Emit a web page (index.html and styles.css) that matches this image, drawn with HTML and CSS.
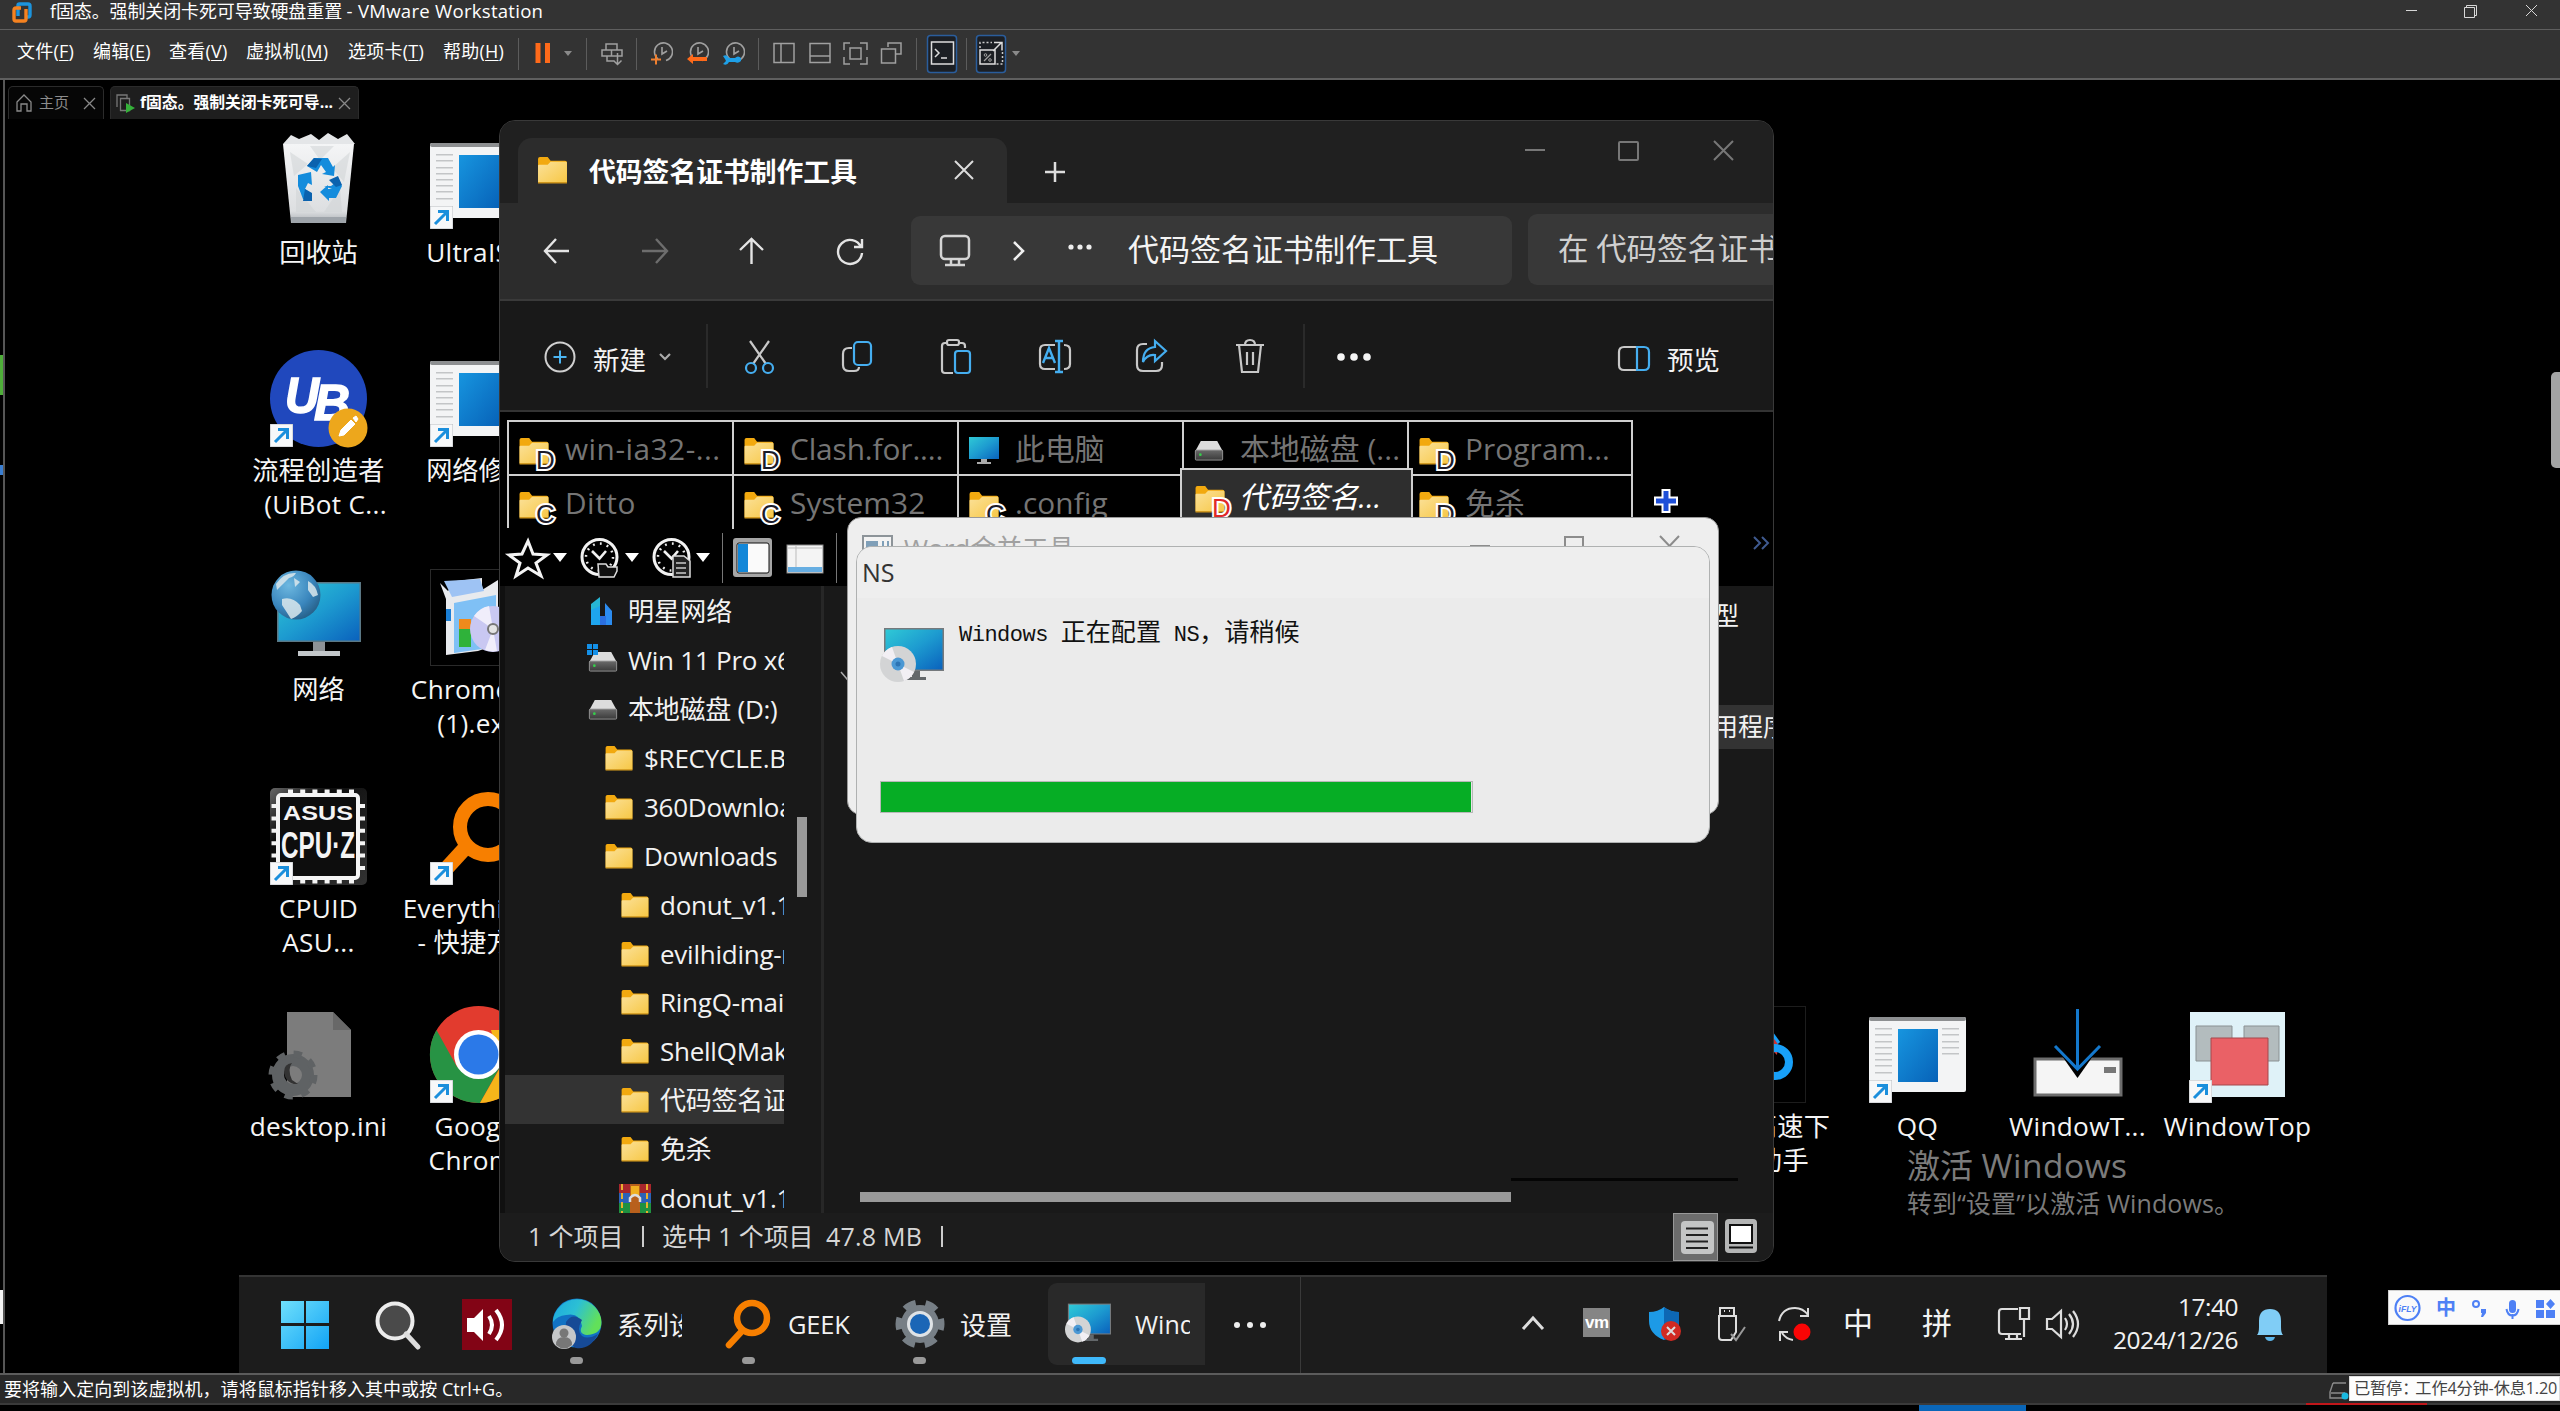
FILE: index.html
```html
<!DOCTYPE html>
<html lang="zh-CN">
<head>
<meta charset="utf-8">
<title>VMware Workstation</title>
<link rel="stylesheet" href="styles.css">
</head>
<body>
<svg width="0" height="0" class="defs">
  <defs>
    <linearGradient id="gFolder" x1="0" y1="0" x2="1" y2="1"><stop offset="0" stop-color="#fbe199"/><stop offset="1" stop-color="#f7c744"/></linearGradient>
    <linearGradient id="gBlue" x1="0" y1="0" x2="1" y2="1"><stop offset="0" stop-color="#1795df"/><stop offset="1" stop-color="#0762b8"/></linearGradient>
    <linearGradient id="gScreen" x1="0" y1="0" x2="1" y2="1"><stop offset="0" stop-color="#2fc9d6"/><stop offset=".5" stop-color="#1d9bd0"/><stop offset="1" stop-color="#0a62bd"/></linearGradient>
    <linearGradient id="gBin" x1="0" y1="0" x2="0" y2="1"><stop offset="0" stop-color="#f4f5f6"/><stop offset=".85" stop-color="#dddfe1"/><stop offset="1" stop-color="#a8adb2"/></linearGradient>
    <radialGradient id="gGlobe" cx=".35" cy=".3" r=".8"><stop offset="0" stop-color="#6db8e0"/><stop offset=".6" stop-color="#3a86bd"/><stop offset="1" stop-color="#23597f"/></radialGradient>
    <linearGradient id="gDrive" x1="0" y1="0" x2="0" y2="1"><stop offset="0" stop-color="#6a6a6a"/><stop offset="1" stop-color="#3a3a3a"/></linearGradient>
    <linearGradient id="gStart" x1="0" y1="0" x2="1" y2="1"><stop offset="0" stop-color="#6fe0fb"/><stop offset="1" stop-color="#12a3f5"/></linearGradient>
    <linearGradient id="gEdge" x1="0" y1="0" x2="1" y2=".4"><stop offset="0" stop-color="#1ba8e0"/><stop offset=".5" stop-color="#2cc0d4"/><stop offset="1" stop-color="#62e05a"/></linearGradient>
    <linearGradient id="gChip" x1="0" y1="0" x2="1" y2="1"><stop offset="0" stop-color="#666"/><stop offset=".3" stop-color="#0c0c0c"/><stop offset="1" stop-color="#333"/></linearGradient>
    <symbol id="folder" viewBox="0 0 30 28"><path d="M0 2q0-2 2-2h8l3 4h15q2 0 2 2v20H0z" fill="#f2a90f"/><path d="M0 9q0-1 1-1h9l3-3h16q1 0 1 1v20q0 1-1 1H1q-1 0-1-1z" fill="url(#gFolder)"/><path d="M0 26h30v1.500H0z" fill="#cf961c"/></symbol>
    <symbol id="shortcut" viewBox="0 0 23 23"><rect width="23" height="23" fill="#f7f8f9" stroke="#b9bcc0" stroke-width="1"/><path d="M5 18 17 6M8 5.500h9.500V15" fill="none" stroke="#1b8fdc" stroke-width="3"/></symbol>
    <symbol id="drive" viewBox="0 0 30 22"><path d="M6 0h18l6 11H0z" fill="#dcdcdc"/><rect x="0" y="10" width="30" height="11" rx="1" fill="url(#gDrive)" stroke="#9a9a9a"/><circle cx="5.500" cy="15" r="1.500" fill="#35d04b"/></symbol>
    <symbol id="appwin" viewBox="0 0 97 76"><rect width="97" height="75" rx="2" fill="#f3f4f5"/><rect width="97" height="4" rx="2" fill="#8d8f91"/><g fill="#c3c5c7"><path d="M6 11h17v1.500H6zM6 17h17v1.500H6zM6 24h17v1.500H6zM6 30h17v1.500H6zM6 36h17v1.500H6zM6 42h17v1.500H6zM6 48h17v1.500H6zM6 55h17v1.500H6zM73 11h17v1.500H73zM73 17h17v1.500H73zM73 24h17v1.500H73zM73 30h17v1.500H73zM73 36h17v1.500H73z"/></g><rect x="29" y="12" width="40" height="53" fill="url(#gBlue)"/></symbol>
    <symbol id="installer" viewBox="0 0 64 54"><rect x="4" y="0" width="60" height="43" fill="#75797c"/><rect x="5.500" y="1.500" width="57" height="40" fill="url(#gScreen)"/><path d="M32 43h8v6H32zM26 49h20v3H26z" fill="#63676a"/><ellipse cx="18" cy="36" rx="18" ry="18" fill="#d3d4d5"/><path d="M18 36 2 28a18 18 0 0 1 10-9zM18 36l16 8a18 18 0 0 1-10 9z" fill="#f2eff4"/><circle cx="18" cy="36" r="6.500" fill="#4b98d4"/><circle cx="18" cy="36" r="2.500" fill="#2c74b4"/></symbol>
    <symbol id="clock" viewBox="0 0 40 40"><circle cx="19.500" cy="19" r="17.500" fill="#000" stroke="#f2f2f2" stroke-width="3"/><circle cx="19.500" cy="19" r="13.500" fill="none" stroke="#eee" stroke-width="2.500" stroke-dasharray="1.800 5.270"/><path d="m12 13 7.500 7.500L26 13" fill="none" stroke="#f2f2f2" stroke-width="2.600"/></symbol>
    <symbol id="snap" viewBox="0 0 22 22"><path d="M7 17A9 9 0 1 1 15 18.500" fill="none" stroke="#a0a0a0" stroke-width="1.600"/><path d="M11 5v7l5-3" fill="none" stroke="#a0a0a0" stroke-width="1.600"/></symbol>
  </defs>
</svg>

<header class="titlebar">
  <svg class="logo" width="20" height="21" viewBox="0 0 20 21"><path d="M6 14V3.500Q6 2 7.500 2H16q2 0 2 2v9q0 2-2 2h-3" fill="none" stroke="#1c94dd" stroke-width="3.400"/><path d="M9 6H4Q2 6 2 8v9q0 2 2 2h8q2 0 2-2V7" fill="none" stroke="#f58220" stroke-width="3.400"/></svg>
  <span class="app-title">f固态。强制关闭卡死可导致硬盘重置 <span class="app-name">- VMware Workstation</span></span>
  <svg class="host-controls" width="134" height="16" viewBox="0 0 134 16" fill="none" stroke="#d8d8d8"><path d="M0 7.500h11M58.500 4.500h10v10h-10zM60.500 4V2.500h10v10H69M120 2l11 11M131 2l-11 11"/></svg>
</header>

<nav class="menubar">
  <span>文件(<u>F</u>)</span><span>编辑(<u>E</u>)</span><span>查看(<u>V</u>)</span><span>虚拟机(<u>M</u>)</span><span>选项卡(<u>T</u>)</span><span>帮助(<u>H</u>)</span>
  <svg class="host-tools" width="520" height="48" viewBox="0 0 520 48" fill="none" stroke="#a0a0a0" stroke-width="1.500">
    <path d="M8.500 8v32M76.500 8v32M126.500 8v32M248.500 8v32M406.500 8v32M456.500 8v32" stroke="#5c5c5c" stroke-width="1"/>
    <path d="M28 13v20M37.500 13v20" stroke="#ff6a1a" stroke-width="5"/>
    <path d="M54 21h8l-4 5zM502 21h8l-4 5z" fill="#8a8a8a" stroke="none"/>
    <path d="M96 20v-6h11v6M101.500 20v6M92 26v-6h20v6zM97 26v5h7M107.500 23v11M103.500 30.500l4 4 4-4"/>
    <use href="#snap" x="141" y="12" width="22" height="22"/><path d="M141 29.500h10M146 24.500v10" stroke="#f08030" stroke-width="2"/>
    <use href="#snap" x="177" y="12" width="22" height="22"/><path d="M177 29l6-5v3h14v4h-14v3z" fill="#ff6a1a" stroke="none"/>
    <use href="#snap" x="213" y="12" width="22" height="22"/><path d="M213 26q4-2 6 2h6q3-3 6 0v3q-3 3-6 1h-6q-2 4-6 2l3-3-1-2z" fill="#1ea0e8" stroke="none"/>
    <path d="M264 13.500h20v19h-20zM271 13v20M300 13.500h20v19h-20zM300 26h20M334 20v-7h6M350 13h7v7M357 27v7h-7M340 34h-6v-7M340 18h11v11h-11zM378 17v-4h13v11h-5M371.500 19h14v14h-14z"/>
    <rect x="417.500" y="5.500" width="29" height="37" rx="3" fill="#1c1f24" stroke="#2a5d9c"/><path d="M421.500 12h22v22h-22z" stroke="#ddd"/><path d="m425 19 4 4-4 4M431 28h6" stroke="#ddd"/>
    <rect x="466.500" y="5.500" width="29" height="37" rx="3" fill="#1c1f24" stroke="#2a5d9c"/><path d="M470 20h15v14h-15zM483 21l8-8M484 12.500h8v8" stroke="#ddd"/><path d="M470 18v-5.500h12M492.500 22v12h-6" stroke="#ccc" stroke-dasharray="2 2"/><path d="M474 31l7-7" stroke-width="1.200"/><circle cx="475.500" cy="25" r="1.300" stroke-width="1"/><circle cx="480" cy="30" r="1.300" stroke-width="1"/>
  </svg>
</nav>

<main class="workspace">
  <div class="tabs">
    <div class="tab"><svg width="16" height="18" viewBox="0 0 16 18"><path d="M1 8 8 1l7 7v9h-4v-7H5v7H1z" fill="none" stroke="#8a8a8a" stroke-width="1.300"/></svg><span>主页</span><svg class="x" width="11" height="13" viewBox="0 0 11 13"><path d="m0 1 11 11M11 1 0 12" stroke="#888" stroke-width="1.300"/></svg></div>
    <div class="tab active"><svg width="20" height="19" viewBox="0 0 20 19"><path d="M1 13V1h10v3M4.500 4.500h9v12h-9z" fill="none" stroke="#777" stroke-width="1.300"/><path d="M10 9l9 5-9 5z" fill="#35b13a"/></svg><span>f固态。强制关闭卡死可导...</span><svg class="x" width="11" height="13" viewBox="0 0 11 13"><path d="m0 1 11 11M11 1 0 12" stroke="#888" stroke-width="1.300"/></svg></div>
  </div>

  <!-- guest desktop icons -->
  <figure class="desk bin"><svg viewBox="0 0 97 97"><path d="M13 12l8-9 8 4 12-5 8 6 9-7 10 6 9-5 8 10z" fill="#e4e6e8"/><path d="M13 12h71l-8 79H21z" fill="url(#gBin)"/><path d="M21 85h55l-.5 6H21.500z" fill="#9ea4aa"/><path d="m20 20 18 12-14 12zM80 20 62 36l12 14zM26 56l20 24H26zM70 56 54 80h18zM40 14l10 14 14-14z" fill="#cfd3d6" opacity=".55"/><g fill="#148cdc"><path d="m37 34 7-8h14l5 9 2-2-1 11-12-2 4-2-5-7-4 7z"/><path d="m28 43 13-3 1 13-4-2-3 6 7 5v5h-9l-5-13z"/><path d="m54 54 7 0 8-6 3 6-6 12h-7v3l-9-9 8-7v4h4z"/></g><path d="m37 34 7-8 8 1-6 9zM35 57l7 4v8h-9zM59 48l9-4 4 9-6 2z" fill="#0b62ae"/></svg><figcaption>回收站</figcaption></figure>
  <figure class="desk uibot"><svg viewBox="0 0 97 97"><circle cx="48.500" cy="48.500" r="48.500" fill="#2048bd"/><g class="ub-text"><text x="15" y="63" textLength="34" lengthAdjust="spacingAndGlyphs">U</text><text x="44" y="70" textLength="36" lengthAdjust="spacingAndGlyphs">B</text></g><circle cx="78" cy="78" r="19.500" fill="#eda71c"/><path d="m69 86 2-6 10-10 4 4-11 11zM83 68l3-2 2 3-2 3z" fill="#fff" stroke="#fff"/><use href="#shortcut" y="74" width="23" height="23"/></svg><figcaption>流程创造者<br><span class="uib">(UiBot C...</span></figcaption></figure>
  <figure class="desk network"><svg viewBox="0 0 97 97"><path d="M7 13h84v60H7z" fill="#5b7885"/><path d="M8.500 14.500h81v57h-81z" fill="url(#gScreen)"/><path d="M43 73h12v10H43z" fill="#8d9296"/><path d="M28 82h42v5H28z" fill="#c3c7ca"/><circle cx="26" cy="26" r="24.500" fill="url(#gGlobe)"/><path d="M6 15Q14 3 26 4q-2 4-7 5-6 6-12 12zM38 12q8 4 10 14l-5 2-5-7zM12 30q10-3 18 6l2 6q-5 6-11 8-5-8-9-14zM24 9l6 4-5 5z" fill="#dbe7ec" opacity=".85"/></svg><figcaption>网络</figcaption></figure>
  <figure class="desk cpuz"><svg viewBox="0 0 97 97"><rect width="97" height="97" rx="5" fill="url(#gChip)"/><rect x="8" y="7" width="80" height="83" rx="3" fill="#0d0d0d" stroke="#f4f4f4" stroke-width="4"/><path d="M18 4h66M18 93h66" stroke="#f4f4f4" stroke-width="5" stroke-dasharray="5 7.200"/><path d="M4 16h0v66M92.500 16v66" stroke="#f4f4f4" stroke-width="5" stroke-dasharray="4 8.400"/><text class="asus" x="13" y="32" textLength="70" lengthAdjust="spacingAndGlyphs">ASUS</text><text class="cpu" x="11" y="70" textLength="74" lengthAdjust="spacingAndGlyphs">CPU·Z</text><use href="#shortcut" y="74" width="23" height="23"/></svg><figcaption>CPUID<br>ASU...</figcaption></figure>
  <figure class="desk ini"><svg viewBox="0 0 97 97"><path d="M17 6h46l18 18v67H17z" fill="#7c7c7c"/><path d="M63 6v18h18z" fill="#686868"/><circle cx="23" cy="69" r="15" fill="none" stroke="#5f6264" stroke-width="12"/><circle cx="23" cy="69" r="21" fill="none" stroke="#5f6264" stroke-width="7" stroke-dasharray="8 8.490"/><path d="M14 66q0-8 8-9-5 6 0 17l6 4q-12 1-14-12z" fill="#333"/></svg><figcaption>desktop.ini</figcaption></figure>

  <figure class="desk ultra"><svg viewBox="0 0 97 97"><use href="#appwin" y="11" width="97" height="76"/><use href="#shortcut" y="74" width="23" height="23"/></svg><figcaption>UltraISO</figcaption></figure>
  <figure class="desk netfix"><svg viewBox="0 0 97 97"><use href="#appwin" y="11" width="97" height="76"/><use href="#shortcut" y="74" width="23" height="23"/></svg><figcaption>网络修复</figcaption></figure>
  <figure class="desk setup"><svg viewBox="0 0 97 97"><rect x=".5" y=".5" width="96" height="96" fill="none" stroke="#2a2a2a"/><path d="M10 14 18 22 26 12 52 9v12l16-10v64L48 82 16 86V30z" fill="#e8eaee"/><path d="M14 12 50 10 54 22 22 28z" fill="#9ec3f4"/><path d="M24 34 66 26v52l-42 6z" fill="#7fc0f5"/><path d="M29 58h12v20H29z" fill="#2fb23a"/><path d="M29 50h12v10H29z" fill="#ef8a1c"/><path d="M16 40h5v12h-5z" fill="#1a7fd6"/><circle cx="63" cy="60" r="23" fill="#c9c8f2"/><path d="M63 60 44 47a23 23 0 0 1 15-10zM63 60l-8 21a23 23 0 0 0 12 1z" fill="#f0eefb"/><circle cx="63" cy="60" r="5" fill="#e4e4e4" stroke="#777" stroke-width="2"/></svg><figcaption><span class="trail">Chrome...</span><br>(1).exe</figcaption></figure>
  <figure class="desk every"><svg viewBox="0 0 97 97"><circle cx="58" cy="39" r="28" fill="none" stroke="#f77f00" stroke-width="14"/><path d="m37 58-22 24" stroke="#f77f00" stroke-width="15"/><use href="#shortcut" y="74" width="23" height="23"/></svg><figcaption><span class="trail ev">Everything</span><br>- 快捷方式</figcaption></figure>
  <figure class="desk chrome"><svg viewBox="0 0 97 97"><circle cx="48.500" cy="48.500" r="48.500" fill="#e23b2e"/><path d="M6.500 24A48.500 48.500 0 0 0 50 97l20-36-43 0z" fill="#279344"/><path d="M90.500 24A48.500 48.500 0 0 1 50 97l21-37-10-36z" fill="#f6b51a"/><circle cx="48.500" cy="48.500" r="24.500" fill="#fff"/><circle cx="48.500" cy="48.500" r="20" fill="#2b79e8"/><use href="#shortcut" y="74" width="23" height="23"/></svg><figcaption>Google<br>Chrome</figcaption></figure>

  <figure class="desk boost"><svg viewBox="0 0 97 97"><rect x=".5" y=".5" width="96" height="96" fill="none" stroke="#1d1d1d"/><path d="M62 28l7 9-1 12-8-8z" fill="#c33"/><path d="M62 26l8 11" stroke="#18a0f8" stroke-width="3"/><circle cx="66" cy="56" r="14" fill="none" stroke="#18a0f8" stroke-width="8"/></svg><figcaption><span class="lead1">高速下</span><br><span class="lead2">助手</span></figcaption></figure>
  <figure class="desk qq"><svg viewBox="0 0 97 97"><use href="#appwin" y="11" width="97" height="76"/><use href="#shortcut" y="74" width="23" height="23"/></svg><figcaption>QQ</figcaption></figure>
  <figure class="desk wt1"><svg viewBox="0 0 97 97"><path d="M6 53h86v36H6z" fill="#f5f5f5" stroke="#6d6d6d" stroke-width="3"/><path d="M33 50 48.500 72 64 50z" fill="#000"/><rect x="75" y="61" width="12" height="6" fill="#777"/><path d="M48.500 3v60M26 40l22.500 23L71 40" fill="none" stroke="#1478cc" stroke-width="3"/></svg><figcaption>WindowT...</figcaption></figure>
  <figure class="desk wt2"><svg viewBox="0 0 97 97"><path d="M1 6h95v85H1z" fill="#dff2f8"/><path d="M7 20h36v35H7zM55 20h35v35H55z" fill="#b3bcbe" stroke="#8a9193"/><path d="M22 32h57v47H22z" fill="#ea6166" stroke="#a5494d"/><use href="#shortcut" y="74" width="23" height="23"/></svg><figcaption>WindowTop</figcaption></figure>

  <div class="watermark"><p>激活 <span>Windows</span></p><p class="small">转到“设置”以激活 Windows。</p></div>

  <!-- file explorer -->
  <section class="explorer">
    <div class="ex-title">
      <div class="ex-tab"><svg width="31" height="27"><use href="#folder" width="31" height="27"/></svg><b>代码签名证书制作工具</b><svg class="ex-close" width="20" height="20" viewBox="0 0 20 20"><path d="m1 1 18 18M19 1 1 19" stroke="#ddd" stroke-width="2"/></svg></div>
      <svg class="plus" width="22" height="22" viewBox="0 0 22 22"><path d="M11 1v20M1 11h20" stroke="#ddd" stroke-width="2.500"/></svg>
      <svg class="ex-controls" width="210" height="22" viewBox="0 0 210 22" fill="none" stroke="#777" stroke-width="2"><path d="M1 10h20M190 1l19 19M209 1l-19 19"/><rect x="95" y="2" width="19" height="18" rx="1"/></svg>
    </div>
    <div class="ex-nav">
      <svg class="arrows" width="322" height="30" viewBox="0 0 322 30" fill="none" stroke="#e4e4e4" stroke-width="2.400"><path d="M26 15H2M13 3 2 15l11 12"/><path d="M99 15h25M113 3l11 12-11 12" stroke="#6d6d6d"/><path d="M208.500 28V3M197 14 208.500 3 220 14"/><path d="M318 11a12 12 0 1 0 1 6M319 3v8h-8"/></svg>
      <div class="address"><svg width="32" height="33" viewBox="0 0 32 33" fill="none" stroke="#d4d4d4" stroke-width="2.500"><rect x="2" y="2" width="28" height="23" rx="4"/><path d="M12 25v5M20 25v5M6 31h20"/></svg><svg width="12" height="20" viewBox="0 0 12 20"><path d="m1 1 9 9-9 9" fill="none" stroke="#eee" stroke-width="2.600"/></svg><svg class="addr-dots" width="26" height="8" viewBox="0 0 26 8" fill="#eee"><circle cx="4" cy="4" r="2.600"/><circle cx="13" cy="4" r="2.600"/><circle cx="22" cy="4" r="2.600"/></svg><span>代码签名证书制作工具</span></div>
      <div class="search">在 代码签名证书</div>
    </div>
    <div class="ex-tools">
      <svg class="new" width="32" height="34" viewBox="0 0 32 34" fill="none"><circle cx="16" cy="17" r="14.500" stroke="#d0d0d0" stroke-width="2"/><path d="M16 10.500v13M9.500 17h13" stroke="#4cb5f2" stroke-width="2"/></svg><span>新建</span>
      <svg class="tools" width="720" height="64" viewBox="0 0 720 64" fill="none" stroke="#c8c8c8" stroke-width="2.200"><path d="m1 30 5 5 5-5" stroke="#aaa"/><path d="M48 0v64M645 0v64" stroke="#303030" stroke-width="1.500"/>
        <path d="m91 17 16 23M110 17 94 40"/><g stroke="#45aef0"><circle cx="92" cy="44" r="5"/><circle cx="109" cy="44" r="5"/></g>
        <path d="M193 24h-3q-6 0-6 6v11q0 6 6 6h5q5 0 5-4"/><rect x="195" y="18" width="17" height="23" rx="4" stroke="#45aef0"/>
        <path d="M288 19h-2q-3 0-3 3v24q0 3 3 3h8M301 19h2q3 0 3 3v2"/><rect x="288" y="16" width="12" height="5" rx="2"/><rect x="296" y="27" width="15" height="22" rx="3" stroke="#45aef0"/>
        <path d="M396 21h-10q-5 0-5 5v14q0 5 5 5h10M405 21q6 0 6 5v14q0 5-6 5"/><path d="M400 17v31M396 17h8M396 48h8M384 39l6-15 6 15M386 34h8" stroke="#45aef0" stroke-width="2.400"/>
        <path d="M488 20h-4q-6 0-6 6v15q0 6 6 6h13q6 0 6-6v-3"/><path d="M496 17l11 10-11 10v-6q-8-1-12 7 0-14 12-15z" stroke="#45aef0"/>
        <path d="M577 21h28M580 21l3 27h16l3-27M586 21q0-5 5-5t5 5M588 28v13M594 28v13"/>
        <g fill="#f4f4f4" stroke="none"><circle cx="682" cy="33" r="3.800"/><circle cx="695" cy="33" r="3.800"/><circle cx="708" cy="33" r="3.800"/></g></svg>
      <svg class="preview" width="34" height="28" viewBox="0 0 34 28" fill="none" stroke-width="2.200"><path d="M20 2H7Q2 2 2 7v13q0 5 5 5h13" stroke="#c8c8c8"/><path d="M20 2h7q5 0 5 5v13q0 5-5 5h-7z" stroke="#45aef0"/></svg><span>预览</span>
    </div>
    <div class="qtabs">
      <div class="qgrid">
        <div class="q"><svg viewBox="0 0 36 36"><use href="#folder" width="30" height="27"/><text class="badge" x="17" y="31">D</text></svg><span class="w1">win-ia32-...</span></div>
        <div class="q"><svg viewBox="0 0 36 36"><use href="#folder" width="30" height="27"/><text class="badge" x="17" y="31">D</text></svg><span class="w2">Clash.for....</span></div>
        <div class="q"><svg viewBox="0 0 36 36"><path d="M0-1h30v22H0z" fill="url(#gScreen)"/><path d="M12 21h6v3H12zM8 24h14v2H8z" fill="#aaa"/></svg><span>此电脑</span></div>
        <div class="q"><svg viewBox="0 0 36 36"><use href="#drive" y="3" width="30" height="20"/></svg><span>本地磁盘 (...</span></div>
        <div class="q"><svg viewBox="0 0 36 36"><use href="#folder" width="30" height="27"/><text class="badge" x="17" y="31">D</text></svg><span>Program...</span></div>
        <div class="q"><svg viewBox="0 0 36 36"><use href="#folder" width="30" height="27"/><text class="badge" x="17" y="31">C</text></svg><span class="w1">Ditto</span></div>
        <div class="q"><svg viewBox="0 0 36 36"><use href="#folder" width="30" height="27"/><text class="badge" x="17" y="31">C</text></svg><span>System32</span></div>
        <div class="q"><svg viewBox="0 0 36 36"><use href="#folder" width="30" height="27"/><text class="badge" x="17" y="31">C</text></svg><span>.config</span></div>
        <div class="q sel"><svg viewBox="0 0 36 36"><use href="#folder" width="30" height="27"/><text class="badge red" x="17" y="31">D</text></svg><span>代码签名...</span></div>
        <div class="q"><svg viewBox="0 0 36 36"><use href="#folder" width="30" height="27"/><text class="badge" x="17" y="31">D</text></svg><span>免杀</span></div>
      </div>
      <svg class="addq" width="24" height="24" viewBox="0 0 24 24"><path d="M8.500 1h7v7.500H23v7h-7.500V23h-7v-7.500H1v-7h7.500z" fill="#1e4fd8" stroke="#fff" stroke-width="2"/></svg>
    </div>
    <div class="qbar">
      <svg width="340" height="54" viewBox="0 0 340 54"><path d="m28 10 5 13 14 1-11 8 5 13-13-8-12 8 4-13-11-8 13-1z" fill="#000" stroke="#f4f4f4" stroke-width="3"/><path d="M53 22h14l-7 9zM125 22h14l-7 9zM196 22h14l-7 9z" fill="#fff"/><use href="#clock" x="80" y="7" width="40" height="40"/><path d="M98 33h8l2 3h9v4l-3 6H99z" fill="#111" stroke="#ddd" stroke-width="1.500"/><use href="#clock" x="152" y="7" width="40" height="40"/><path d="M173 25h11l6 5v16h-17z" fill="#222" stroke="#ddd" stroke-width="1.500"/><path d="M176 32h10M176 37h10M176 42h10" stroke="#ccc" stroke-width="1.500"/><path d="M222.500 2v50M336.500 2v50" stroke="#777"/><rect x="233" y="7" width="39" height="39" rx="3" fill="#a6a6a6"/><rect x="237" y="12" width="32" height="30" rx="2" fill="#fafafa" stroke="#111"/><rect x="238" y="13" width="10" height="28" fill="#1387d8"/><rect x="287" y="14" width="36" height="28" fill="#f4f4f4" stroke="#888"/><path d="M288 36h34v5h-34z" fill="#67aee2"/><path d="M288 17h34M296 14v22" stroke="#bbb"/></svg>
      <svg class="more" width="17" height="14" viewBox="0 0 17 14"><path d="m1 1 6 6-6 6M9 1l6 6-6 6" fill="none" stroke="#3f5a90" stroke-width="2"/></svg>
    </div>
    <div class="ex-body">
      <div class="tree">
        <div class="row"><svg viewBox="0 0 30 28"><path d="M3 7 12 0v28H3z" fill="#27b5d4"/><path d="M3 13l9-4v19H3z" fill="#1ea5ee"/><path d="M17 6l7 8v14h-7z" fill="#2c8cf0"/><path d="M12 19h6v9h-6z" fill="#2b6fe0"/></svg>明星网络</div>
        <div class="row"><svg viewBox="0 0 30 28"><use href="#drive" x="0" y="6" width="30" height="20"/><path d="M-1-2h5v5h-5zM5-2h5v5H5zM-1 4h5v5h-5zM5 4h5v5H5z" fill="#1390e8"/></svg>Win 11 Pro x64</div>
        <div class="row"><svg viewBox="0 0 30 28"><use href="#drive" x="0" y="5" width="30" height="20"/></svg>本地磁盘 (D:)</div>
        <div class="row l1"><svg viewBox="0 0 30 28"><use href="#folder" y="2" width="30" height="25"/></svg>$RECYCLE.BIN</div>
        <div class="row l1"><svg viewBox="0 0 30 28"><use href="#folder" y="2" width="30" height="25"/></svg>360Downloads</div>
        <div class="row l1"><svg viewBox="0 0 30 28"><use href="#folder" y="2" width="30" height="25"/></svg>Downloads</div>
        <div class="row l2"><svg viewBox="0 0 30 28"><use href="#folder" y="2" width="30" height="25"/></svg>donut_v1.1</div>
        <div class="row l2"><svg viewBox="0 0 30 28"><use href="#folder" y="2" width="30" height="25"/></svg>evilhiding-main</div>
        <div class="row l2"><svg viewBox="0 0 30 28"><use href="#folder" y="2" width="30" height="25"/></svg>RingQ-main</div>
        <div class="row l2"><svg viewBox="0 0 30 28"><use href="#folder" y="2" width="30" height="25"/></svg>ShellQMaker</div>
        <div class="row l2 on"><svg viewBox="0 0 30 28"><use href="#folder" y="2" width="30" height="25"/></svg>代码签名证书</div>
        <div class="row l2"><svg viewBox="0 0 30 28"><use href="#folder" y="2" width="30" height="25"/></svg>免杀</div>
        <div class="row l2"><svg viewBox="0 0 30 28"><path d="M-1 0h32v9H-1z" fill="#a8262c"/><path d="M-1 9h32v10H-1z" fill="#2b62b8"/><path d="M-1 19h32v11H-1z" fill="#1f9140"/><path d="M2 0v30M27 0v30" stroke="#e8b030" stroke-width="2" stroke-dasharray="6 3"/><path d="M10 0h10v30H10z" fill="#b8601c"/><path d="M11 2h8v10h-8z" fill="#f0b020"/><path d="M10 18v-4q5-6 10 0v4" fill="none" stroke="#ddd" stroke-width="2.500"/></svg>donut_v1.1</div>
      </div>
      <div class="tree-scroll"><i></i></div>
      <div class="files">
        <div class="col-head"><svg width="12" height="8" viewBox="0 0 12 8"><path d="m0 0 6 7 6-7" fill="none" stroke="#aaa" stroke-width="1.500"/></svg><span>型</span></div>
        <div class="file-row">用程序</div>
        <div class="hline"></div>
        <div class="hscroll"></div>
      </div>
    </div>
    <div class="ex-status"><span class="s1">1 个项目</span><i></i><span class="s2">选中 1 个项目</span><span class="s3">47.8 MB</span><i></i>
      <svg width="88" height="48" viewBox="0 0 88 48"><rect x=".5" y=".5" width="44" height="47" fill="#6c6c6c" stroke="#989898"/><rect x="8" y="8" width="33" height="33" rx="4" fill="#c4c5c5"/><path d="M13 15.500h22M13 22h22M13 28.500h22M13 35h22" stroke="#222" stroke-width="1.800"/><rect x="52" y="6" width="32" height="34" rx="4" fill="#b5b6b6"/><rect x="57" y="12" width="22" height="18" fill="#fff" stroke="#111" stroke-width="2"/><path d="M56 34.500h24" stroke="#111" stroke-width="2"/></svg>
    </div>
  </section>

  <!-- dialogs -->
  <section class="dlg-back">
    <svg width="31" height="26" viewBox="0 0 31 26"><rect x="1" y="1" width="29" height="24" fill="#f3f3f3" stroke="#8d9499" stroke-width="2"/><path d="M4 6h12v14H4zM20 6h2v12h-2zM25 6h2v12h-2z" fill="#7f9fb8"/></svg><span>Word合并工具</span>
    <svg class="dlg-controls" width="212" height="22" viewBox="0 0 212 22" fill="none" stroke="#8c8c8c" stroke-width="2"><path d="M0 11h20M190 1l19 20M209 1l-19 20"/><rect x="95" y="2" width="18" height="18"/></svg>
  </section>
  <section class="dlg">
    <header>NS</header>
    <div class="dlg-msg"><svg width="64" height="54"><use href="#installer" width="64" height="54"/></svg><p><span class="m">Windows </span>正在配置<span class="m"> NS</span>，请稍候</p></div>
    <div class="progress"><div></div></div>
  </section>

  <!-- guest taskbar -->
  <div class="taskbar">
    <svg class="pinned" width="239" height="52" viewBox="0 0 239 52"><path d="M0 2h23v22H0zM25 2h23v22H25zM0 27h23v23H0zM25 27h23v23H25z" fill="url(#gStart)"/><circle cx="114" cy="22" r="17.500" fill="#4a4a4a" stroke="#ececec" stroke-width="4"/><path d="m125 35 12 13" stroke="#ddd" stroke-width="5" stroke-linecap="round"/><rect x="181" width="50" height="51" fill="#820415"/><path d="M186 19h7l9-9v32l-9-9h-7z" fill="#fff"/><path d="M208 17q6 9 0 18M215 11q12 15 0 30" fill="none" stroke="#fff" stroke-width="4"/></svg>
    <div class="task t-edge"><svg width="50" height="52" viewBox="0 0 50 52"><circle cx="25" cy="25" r="24.500" fill="#1172c4"/><path d="M1 22A24.500 24.500 0 0 1 49 20q3 16-14 17-9-1-5-9Q28 14 14 17 5 18 1 24z" fill="url(#gEdge)"/><path d="M14 24q6-10 16-2-6 10 0 16 6 4 16-2-8 16-22 14-12-6-10-26z" fill="#164a96"/><circle cx="12" cy="39" r="12" fill="#c5c7c9"/><circle cx="12" cy="35" r="4.500" fill="#777"/><path d="M4 47q0-8 8-8t8 8q-8 7-16 0z" fill="#777"/></svg><span>系列设置</span></div>
    <div class="task t-geek"><svg width="46" height="50" viewBox="0 0 46 50"><circle cx="27" cy="19" r="15" fill="none" stroke="#f77f00" stroke-width="6.500"/><path d="M17 32 4 46" stroke="#f77f00" stroke-width="6.500" stroke-linecap="round"/></svg><span>GEEK</span></div>
    <div class="task t-set"><svg width="50" height="50" viewBox="0 0 50 50"><circle cx="25" cy="25" r="19" fill="#777f86"/><circle cx="25" cy="25" r="21" fill="none" stroke="#777f86" stroke-width="7" stroke-dasharray="12 9.990" stroke-dashoffset="6"/><circle cx="25" cy="25" r="11.500" fill="#1b66b6" stroke="#dfe3e6" stroke-width="3"/></svg><span>设置</span></div>
    <div class="task t-win"><svg width="46" height="42"><use href="#installer" width="46" height="40"/></svg><span>Windows</span></div>
    <svg class="task-dots" width="36" height="10" viewBox="0 0 36 10" fill="#eee"><circle cx="4" cy="5" r="3"/><circle cx="17" cy="5" r="3"/><circle cx="30" cy="5" r="3"/></svg>
    <i class="task-sep"></i>
    <svg class="tray" width="298" height="40" viewBox="0 0 298 40" fill="none" stroke="#ddd" stroke-width="2"><path d="m1 26 10-11 10 11" stroke-width="3"/><rect x="61" y="5" width="27" height="29" fill="#858585" stroke="none"/><text class="vm" x="63" y="25" textLength="24">vm</text><path d="M127 9q9 0 15-5 6 5 15 5v9q0 13-15 19-15-6-15-19z" fill="#1d9ae6" stroke="none"/><path d="M142 4v33q15-6 15-19V9q-9 0-15-5z" fill="#0d67b4" stroke="none"/><circle cx="149" cy="28" r="10" fill="#d12a22" stroke="none"/><path d="m145 24 8 8M153 24l-8 8"/><path d="M198 13V5h14v8M197 13h17v16l-5 8h-9q-3 0-3-3zM202 8h1M207 8h1"/><path d="m209 31 5 6 9-13" stroke="#999"/><path d="M257 18q3-13 16-13 8 0 13 7M286 5v8h-8M258 38v-9h8M260 30q4 6 11 7"/><circle cx="280" cy="29" r="8.500" fill="#fa0505" stroke="none"/></svg>
    <span class="ime a">中</span><span class="ime b">拼</span>
    <svg class="netvol" width="84" height="36" viewBox="0 0 84 36" fill="none" stroke="#ddd" stroke-width="2.200"><path d="M22 3H6Q3 3 3 6v19q0 3 3 3h19M9 33h17M13 28v5M21 28v5M24 2h9v11h-9zM28 13v18"/><path d="M51 13h5l9-8v26l-9-8h-5zM69 12q4 6 0 12M73 8q8 10 0 20M77 5q10 13 0 26"/></svg>
    <div class="clock"><span>17:40</span><span>2024/12/26</span></div>
    <svg class="bell" width="28" height="34" viewBox="0 0 28 34"><path d="M1 27q2-2 2-8v-6Q3 1 14 1t11 12v6q0 6 2 8z" fill="#80cdf6"/><path d="M9 29h10q-1 4-5 4t-5-4z" fill="#5db6ea"/></svg>
  </div>

  <div class="edge-scroll"></div>
  <div class="ifly"><svg width="172" height="34" viewBox="0 0 172 34"><circle cx="18.500" cy="17" r="12" fill="none" stroke="#4e80f5" stroke-width="2.200"/><text class="ifly-t" x="9.500" y="20.500" textLength="18" lengthAdjust="spacingAndGlyphs">iFLY</text><text class="ifly-z" x="47" y="24">中</text><g fill="#4e80f5"><circle cx="87" cy="13" r="3" fill="none" stroke="#4e80f5" stroke-width="2"/><path d="M92 18h5v4l-3 4h-2l1-4h-1z"/><rect x="120" y="9" width="7" height="13" rx="3.500"/><path d="M122.500 23v5h2v-5z"/><path d="M147 9h8v8h-8zM147 19h8v8h-8zM157 19h9v8h-9zM161.500 8l4.500 5-4.500 5-4.500-5z"/></g><path d="M117.500 18q1 6.500 6 6.500t6-6.500" fill="none" stroke="#4e80f5" stroke-width="2"/></svg></div>
  <i class="edge-green"></i><i class="edge-blue"></i><i class="edge-white"></i>
</main>

<footer class="statusbar">
  <span class="hint">要将输入定向到该虚拟机，请将鼠标指针移入其中或按 Ctrl+G。</span>
  <svg class="disk" width="20" height="18" viewBox="0 0 20 18"><path d="M4 1h13M4 1 1 10v6h14M2 11h14" fill="none" stroke="#8a8a8a" stroke-width="1.400"/><circle cx="16" cy="14" r="3.500" fill="#19b9e0"/></svg>
  <span class="notice">已暂停<span class="colon">：</span> 工作4分钟-休息1.20</span>
</footer>
<div class="under"><i class="u-red"></i><i class="u-blue"></i></div>
</body>
</html>
```
FILE: styles.css
```css
* { box-sizing: border-box; }
body {
  margin: 0; width: 2560px; height: 1411px; overflow: hidden;
  display: grid; grid-template-rows: 30px 50px 1293px 30px 8px;
  background: #000; color: #f2f2f2;
  font-family: "Open Sans", "Noto Sans CJK SC", sans-serif;
  white-space: nowrap;
}
svg { display: block; flex: none; overflow: visible; }
.defs { position: absolute; }
p, figure { margin: 0; }

.titlebar { display: flex; background: #333; border-bottom: 1px solid #5f5f5f; padding-left: 12px; }
.logo { margin-top: 2px; }
.app-title { margin-left: 18px; font-size: 18px; line-height: 22px; letter-spacing: -.12px; color: #fff; }
.app-name { font-size: 18.600px; letter-spacing: .25px; }
.host-controls { margin: 3px 20px 0 auto; }

.menubar { display: flex; background: #333; border-bottom: 2px solid #5f5f5f; padding-left: 17px; font-size: 18px; line-height: 43px; color: #fff; }
.menubar span { letter-spacing: .25px; }
.menubar span:nth-child(1), .menubar span:nth-child(2) { width: 76px; }
.menubar span:nth-child(3) { width: 77px; }
.menubar span:nth-child(4) { width: 102px; }
.menubar span:nth-child(5) { width: 95px; }
.menubar span:nth-child(6) { width: 67px; }
.menubar u { text-underline-offset: 2px; text-decoration-thickness: 1px; }

.workspace { position: relative; border-left: 1px solid #000; }
.workspace::before { content: ""; position: absolute; left: 2px; top: 0; width: 2px; height: 100%; background: #565656; }
.tabs { display: flex; gap: 6px; padding: 6px 0 0 7px; }
.tab { display: flex; align-items: center; width: 96px; height: 33px; padding-left: 7px; background: #060606; border: 1px solid #2b2b2b; border-bottom: 0; border-radius: 5px 5px 0 0; font-size: 15px; line-height: 30px; color: #8c8c8c; }
.tab span { margin: -2px 0 0 7px; }
.tab .x { margin-left: auto; margin-right: 8px; }
.tab.active { width: 249px; padding-left: 5px; background: #1e1e1e; color: #fff; font-weight: 700; font-size: 15.8px; }
.tab.active span { margin-left: 4px; letter-spacing: -.02px; }

.desk { position: absolute; width: 240px; display: flex; flex-direction: column; align-items: center; }
.desk svg { width: 97px; height: 97px; }
.desk figcaption { margin-top: 6px; margin-left: 1px; font-size: 26.200px; line-height: 34px; text-align: center; color: #f5f5f5; letter-spacing: .3px; }
.bin, .uibot, .network, .cpuz, .ini { left: 197px; }
.ultra, .netfix, .setup, .every, .chrome { left: 357px; }
.bin, .ultra { top: 52px; }
.uibot, .netfix { top: 270px; }
.network, .setup { top: 489px; }
.cpuz, .every { top: 708px; }
.ini, .chrome, .boost, .qq, .wt1, .wt2 { top: 926px; }
.boost { left: 1636px; }
.qq { left: 1796px; }
.wt1 { left: 1956px; }
.wt2 { left: 2116px; }
.uib { margin-left: 14px; }
.bin figcaption, .network figcaption, .netfix figcaption { letter-spacing: 0; }
.trail { margin-right: 14px; }
.trail.ev { margin-right: 20px; }
.lead1 { margin-left: 66px; }
.lead2 { margin-left: 50px; }
.ub-text text { font: italic 700 50px "Liberation Sans", sans-serif; fill: #fff; stroke: #fff; stroke-width: 1.5px; }
.asus { font: 700 20px "Liberation Sans", sans-serif; fill: #f4f4f4; }
.cpu { font: 700 37px "Liberation Sans", sans-serif; fill: #f4f4f4; }

.watermark { position: absolute; left: 1906px; top: 1063px; color: #7b7b7b; font-size: 33px; line-height: 44px; }
.watermark span { font-size: 33.500px; letter-spacing: .5px; }
.watermark .small { margin-top: -2px; font-size: 25px; line-height: 34px; letter-spacing: .1px; }

.explorer { position: absolute; left: 498px; top: 40px; width: 1275px; height: 1142px; display: flex; flex-direction: column; overflow: hidden; background: #191919; border: 1px solid #393939; border-radius: 16px; }
.ex-title { display: flex; height: 82px; background: #202020; padding-left: 18px; }
.ex-tab { display: flex; align-items: center; width: 489px; height: 65px; margin-top: 17px; padding: 0 33px 0 19px; background: #2c2c2c; border-radius: 14px 14px 0 0; font-size: 26.800px; color: #fff; }
.ex-tab b { margin-left: 21px; }
.ex-close { margin-left: auto; margin-top: -2px; }
.plus { margin: 40px 0 0 37px; }
.ex-controls { margin: 19px 39px 0 auto; }
.ex-nav { display: flex; height: 98px; background: #2c2c2c; border-bottom: 2px solid #3a3a3a; }
.arrows { margin: 33px 0 0 43px; }
.address { display: flex; align-items: center; flex: none; width: 601px; height: 69px; margin: 13px 0 0 46px; padding-left: 28px; background: #383838; border-radius: 9px; }
.address svg:nth-child(2) { margin-left: 42px; }
.addr-dots { margin: -8px 0 0 42px; }
.address span { margin: -6px 0 0 35px; font-size: 31px; color: #f4f4f4; }
.search { flex: none; width: 260px; height: 71px; margin: 11px 0 0 16px; padding-left: 30px; background: #383838; border-radius: 9px; font-size: 30.500px; line-height: 69px; color: #cfcfcf; letter-spacing: -.1px; }
.ex-tools { display: flex; height: 111px; border-bottom: 2px solid #333; font-size: 26.500px; line-height: 36px; color: #f4f4f4; }
.ex-tools .new { margin: 39px 17px 0 44px; }
.ex-tools span { margin-top: 41px; }
.ex-tools .tools { margin: 23px 0 0 13px; }
.ex-tools .preview { margin: 44px 16px 0 238px; }

.qtabs { display: flex; height: 119px; background: #000; padding: 8px 0 0 7px; }
.qgrid { display: grid; grid-template-columns: 225px 225px 225px 225px 224px; grid-template-rows: 54px 55px; flex: none; width: 1125px; height: 108px; border-left: 2px solid #cfcfcf; }
.q { display: flex; padding: 16px 0 0 10px; border: solid #cfcfcf; border-width: 2px 2px 0 0; font-size: 29.800px; line-height: 29px; color: #757575; letter-spacing: .1px; }
.q svg { width: 36px; height: 36px; margin-right: 10px; }
.q span { margin-top: -4px; }
.q .w1 { letter-spacing: .5px; }
.q .w2 { letter-spacing: -.1px; }
.q.sel { position: relative; margin: -6px -4px 0 -4px; padding-left: 13px; background: #2e2e2e; border-width: 2px; color: #fff; font-style: italic; }
.q.sel span { margin-left: -2px; }
.badge { font: 26px "Liberation Sans", sans-serif; fill: #1c1c2a; stroke: #fff; stroke-width: 4px; paint-order: stroke; }
.badge.red { fill: #e02828; }
.addq { margin: 69px 0 0 22px; }
.qbar { display: flex; height: 55px; background: #000; }
.more { margin: 5px 3px 0 auto; }

.ex-body { display: flex; flex: 1; min-height: 0; }
.tree { flex: none; width: 284px; padding-left: 5px; overflow: hidden; background: linear-gradient(90deg, #101010 5px, #191919 5px); }
.row { display: flex; align-items: center; height: 48.950px; padding: 1px 0 0 83px; font-size: 26px; line-height: 36px; color: #f2f2f2; letter-spacing: -.25px; }
.row svg { width: 30px; height: 28px; margin-right: 10px; }
.row:first-child { letter-spacing: .1px; }
.row.l1 { padding-left: 99px; }
.row.l2 { padding-left: 115px; }
.row.on { background: #333; }
.tree-scroll { display: flex; flex: none; justify-content: center; width: 40px; padding: 231px 2px 0 0; border-right: 3px solid #272727; }
.tree-scroll i { width: 10px; height: 80px; background: #999; }
.files { flex: 1; display: flex; flex-direction: column; padding: 13px 0 0 2px; font-size: 25px; }
.col-head { display: flex; height: 106px; line-height: 32px; padding-left: 15px; }
.col-head svg { margin-top: 73px; }
.col-head span { margin-left: 861px; }
.file-row { height: 44px; line-height: 42px; margin-left: 30px; padding-left: 857px; background: #333; overflow: hidden; }
.hline { width: 227px; height: 3px; margin: 429px 0 0 685px; background: #050505; }
.hscroll { width: 651px; height: 10px; margin: 11px 0 0 34px; background: #999; }
.ex-status { display: flex; align-items: center; height: 48px; padding: 0 12px 2px 28px; background: #1c1c1c; font-size: 25px; line-height: 36px; color: #d6d6d6; letter-spacing: -.1px; }
.ex-status i { width: 2px; height: 21px; background: #ccc; }
.ex-status .s1 { width: 114px; }
.ex-status .s2 { width: 164px; margin-left: 18px; }
.ex-status .s3 { width: 115px; letter-spacing: .2px; }
.ex-status svg { margin: 2px 0 0 auto; }

.dlg-back { position: absolute; left: 846px; top: 437px; width: 872px; height: 298px; display: flex; padding: 17px 36px 0 14px; background: #eee; border: 1px solid #999; border-radius: 14px; font-size: 26px; line-height: 26px; color: #a0a0a0; }
.dlg-back span { margin-left: 11px; }
.dlg-controls { margin: 0 0 0 auto; }
.dlg { position: absolute; left: 855px; top: 466px; width: 854px; height: 297px; overflow: hidden; background: #ebebeb; border: 1.500px solid #afb1b1; border-radius: 16px; color: #111; }
.dlg header { height: 51px; padding-left: 5px; background: #eee; font-size: 25px; line-height: 50px; color: #333; }
.dlg-msg { display: flex; padding: 30px 0 0 23px; }
.dlg-msg p { margin: -16px 0 0 15px; font: 25.100px/36px "Noto Sans CJK SC", sans-serif; }
.dlg-msg .m { font-family: "Liberation Mono", monospace; font-size: 22px; letter-spacing: -.5px; white-space: pre; }
.progress { width: 593px; height: 32px; margin: 99px 0 0 23px; border: 1px solid #b8b8b8; background: #e6e6e6; }
.progress div { width: 590px; height: 30px; background: #06ad25; }

.taskbar { position: absolute; left: 238px; top: 1195px; width: 2088px; height: 98px; display: flex; background: #1c1c1c; border-top: 2px solid #343434; font-size: 26px; color: #f2f2f2; }
.pinned { margin: 22px 0 0 42px; }
.task { position: relative; display: flex; flex: none; height: 82px; margin-top: 6px; align-items: center; }
.task span { overflow: hidden; }
.task::after { content: ""; position: absolute; bottom: 1px; width: 13px; height: 7px; border-radius: 4px; background: #999; }
.t-edge { margin-left: 32px; width: 173px; }
.t-edge span { margin-left: 15px; width: 65px; }
.t-edge::after { left: 18px; }
.t-geek { width: 170px; font-size: 25.500px; }
.t-geek span { margin-left: 17px; letter-spacing: -.2px; }
.t-geek::after { left: 17px; }
.t-set { width: 153px; }
.t-set span { margin-left: 15px; }
.t-set::after { left: 18px; }
.t-win { width: 157px; padding-left: 17px; background: #292929; border-radius: 9px 0 0 9px; }
.t-win span { margin-left: 24px; width: 55px; font-size: 25px; }
.t-win::after { left: 24px; width: 34px; background: #3fb9fb; }
.task-dots { margin: 43px 0 0 28px; }
.task-sep { width: 1px; margin: 0 0 0 31px; background: #3a3a3a; }
.tray { margin: 26px 0 0 221px; }
.vm { font: 700 17px "Liberation Sans", sans-serif; fill: #fff; stroke: none; }
.ime { font-size: 30px; line-height: 91px; }
.ime.a { margin-left: 23px; width: 79px; }
.ime.b { width: 74px; }
.netvol { margin: 29px 0 0 0; }
.clock { width: 158px; margin-top: 13px; display: flex; flex-direction: column; text-align: right; font-size: 24.500px; line-height: 33px; letter-spacing: -.5px; }
.bell { margin: 31px 0 0 18px; }

.edge-scroll { position: absolute; right: 0; top: 292px; width: 9px; height: 96px; background: #a3a4a4; border-radius: 5px 0 0 5px; }
.ifly { position: absolute; right: 0; top: 1210px; width: 172px; height: 35px; background: #fafafa; border: solid #d0d0d0; border-width: 1px 0 1px 1px; }
.ifly-t { font: italic 700 9px "Liberation Sans", sans-serif; fill: #4e80f5; }
.ifly-z { font: 700 20px "Noto Sans CJK SC", sans-serif; fill: #4e80f5; }
.edge-green, .edge-blue, .edge-white { position: absolute; left: -1px; width: 3px; }
.edge-green { top: 275px; height: 40px; background: #4fae3a; }
.edge-blue { top: 385px; height: 10px; background: #3a7ed0; }
.edge-white { top: 1210px; height: 34px; background: #f4f4f4; }

.statusbar { display: flex; background: #282828; border-top: 2px solid #5c5c5c; padding-left: 4px; font-size: 18px; line-height: 28px; color: #fff; }
.hint { letter-spacing: .05px; }
.disk { margin: 7px 0 0 auto; }
.notice { width: 211px; height: 25px; padding-left: 4px; margin-top: 1px; background: #fdfdfd; color: #444; font-size: 16.200px; line-height: 22px; letter-spacing: -.15px; border: 1px solid #ddd; }
.notice .colon { letter-spacing: -7px; }
.under { position: relative; border-top: 2px solid #3a3a3a; }
.u-red { position: absolute; left: 2306px; top: -2px; width: 121px; height: 2px; background: #c0161a; }
.u-blue { position: absolute; left: 1919px; top: 0; width: 107px; height: 8px; background: #0a66b8; }
```
